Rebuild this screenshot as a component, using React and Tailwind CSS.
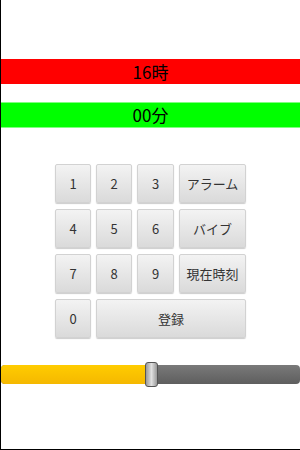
const keys = [
  { label: '1' }, { label: '2' }, { label: '3' }, { label: 'アラーム' },
  { label: '4' }, { label: '5' }, { label: '6' }, { label: 'バイブ' },
  { label: '7' }, { label: '8' }, { label: '9' }, { label: '現在時刻' },
  { label: '0' }, { label: '登録', wide: true },
]

function Key({ label, wide }) {
  return (
    <button
      className={
        'flex items-center justify-center rounded-[2px] border border-[#d2d2d2] bg-gradient-to-b from-[#f3f3f3] to-[#dadada] text-[13px] text-[#333] shadow-[0_1px_1px_rgba(0,0,0,0.2)] ' +
        (wide ? 'col-span-3' : '')
      }
    >
      {label}
    </button>
  )
}

export default function App() {
  const value = 48

  return (
    <div
      className="w-[300px] h-[450px] bg-white border-l border-b border-black flex flex-col overflow-hidden"
      style={{ fontFamily: '"Noto Sans CJK JP", "Noto Sans", sans-serif' }}
    >
      {/* hour / minute */}
      <div className="mt-[59px] h-[25px] bg-[#ff0000] flex items-center justify-center text-[17px] text-black">
        16時
      </div>
      <div className="mt-[18px] h-[26px] bg-[#00ff00] border-y border-[#80ff80] flex items-center justify-center text-[17px] text-black">
        00分
      </div>

      {/* keypad */}
      <div className="mt-[36px] pl-[54px] grid grid-cols-[36px_36px_37px_67px] grid-rows-[39px_39px_39px_39px] gap-x-[5px] gap-y-[6px]">
        {keys.map(k => (
          <Key key={k.label} label={k.label} wide={k.wide} />
        ))}
      </div>

      {/* slider */}
      <div className="relative mt-[24px] h-[25px] flex items-center">
        <div className="h-[19px] w-full rounded-[4px] bg-gradient-to-b from-[#7a7a7a] to-[#5e5e5e] overflow-hidden">
          <div
            className="h-full bg-gradient-to-b from-[#ffcc00] to-[#f5b800]"
            style={{ width: `${value}%` }}
          />
        </div>
        <div className="absolute left-[144px] top-0 h-[25px] w-[13px] rounded-[3px] border border-[#555] bg-gradient-to-r from-[#9a9a9a] via-[#e0e0e0] to-[#9a9a9a]" />
      </div>
    </div>
  )
}
